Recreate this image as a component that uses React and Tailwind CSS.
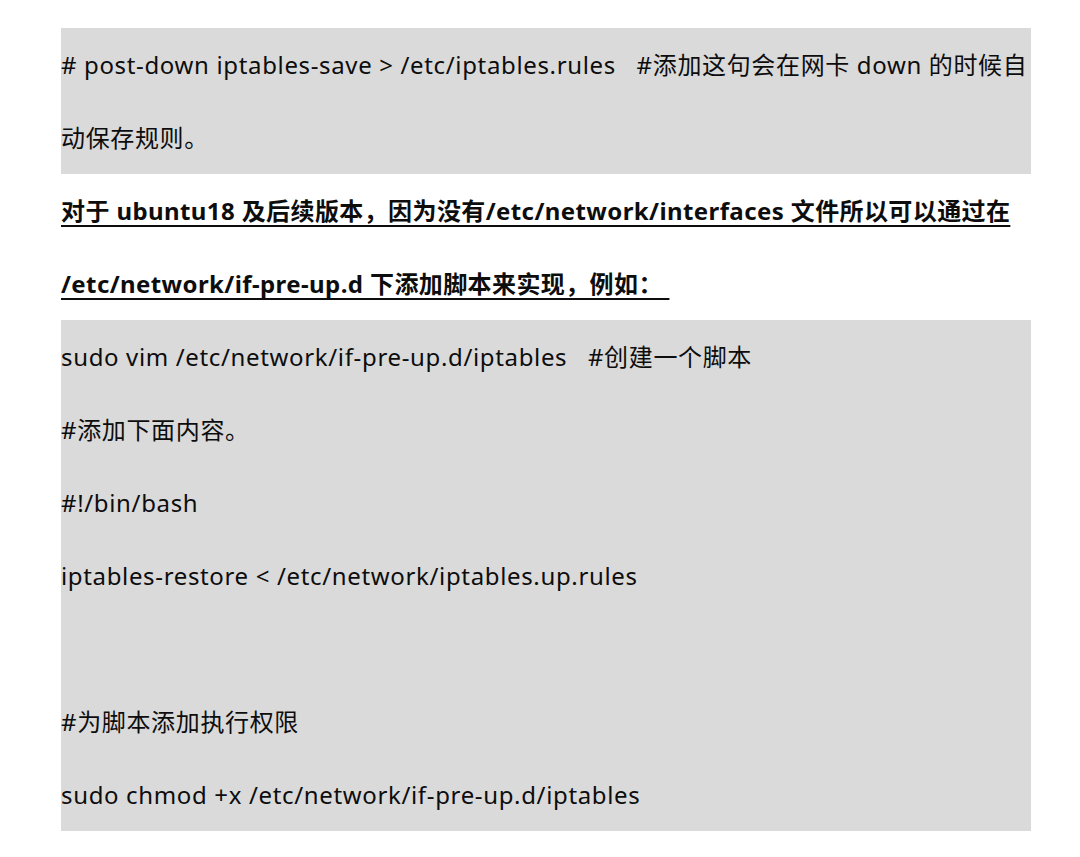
import React from 'react';

const codeBlockOne = [
  '# post-down iptables-save > /etc/iptables.rules   #添加这句会在网卡 down 的时候自',
  '动保存规则。',
];

const headingLines = [
  '对于 ubuntu18 及后续版本，因为没有/etc/network/interfaces 文件所以可以通过在',
  '/etc/network/if-pre-up.d 下添加脚本来实现，例如： ',
];

const codeBlockTwo = [
  'sudo vim /etc/network/if-pre-up.d/iptables   #创建一个脚本',
  '#添加下面内容。',
  '#!/bin/bash',
  'iptables-restore < /etc/network/iptables.up.rules',
  '',
  '#为脚本添加执行权限',
  'sudo chmod +x /etc/network/if-pre-up.d/iptables',
];

const Line = ({ children, bold }) => (
  <div className={`h-[73px] leading-[73px] whitespace-pre ${bold ? 'font-bold tracking-[0.4px]' : 'tracking-[0.65px]'}`}>
    {bold ? (
      <span className="underline decoration-[2px] underline-offset-[5px] [text-decoration-skip-ink:none]">{children}</span>
    ) : (
      children || '\u00a0'
    )}
  </div>
);

const App = () => {
  return (
    <div
      className="min-h-[857px] bg-white text-[#0d0d0d] text-[24px] pt-[28px] pl-[61px]"
      style={{ fontFamily: '"Noto Sans", "Noto Sans CJK SC", sans-serif' }}
    >
      <div className="w-[970px]">
        <div className="bg-[#dadada]">
          {codeBlockOne.map((l, i) => <Line key={i}>{l}</Line>)}
        </div>
        <div>
          {headingLines.map((l, i) => <Line key={i} bold>{l}</Line>)}
        </div>
        <div className="bg-[#dadada]">
          {codeBlockTwo.map((l, i) => <Line key={i}>{l}</Line>)}
        </div>
      </div>
    </div>
  );
};

export default App;
